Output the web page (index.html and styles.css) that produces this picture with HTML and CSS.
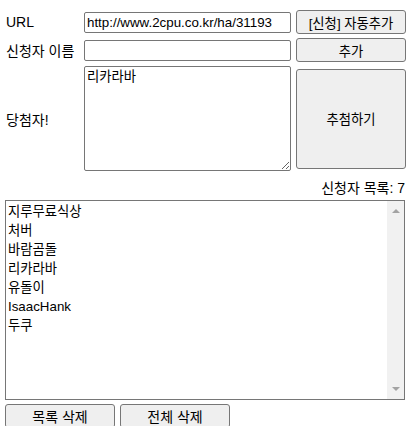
FILE: index.html
```html
<!DOCTYPE html>
<html lang="ko">
<head>
<meta charset="utf-8">
<link rel="stylesheet" href="styles.css">
</head>
<body>
<div class="page">
  <div class="form">
    <label class="lbl">URL</label>
    <input class="field" type="text" value="http://www.2cpu.co.kr/ha/31193">
    <button class="btn btn-row">[신청] 자동추가</button>

    <label class="lbl">신청자 이름</label>
    <input class="field" type="text" value="">
    <button class="btn btn-row">추가</button>

    <label class="lbl">당첨자!</label>
    <textarea class="winner">리카라바</textarea>
    <button class="btn btn-draw">추첨하기</button>
  </div>

  <div class="count">신청자 목록: 7</div>

  <div class="listbox">
    <div class="items">
      <div>지루무료식상</div>
      <div>처버</div>
      <div>바람곰돌</div>
      <div>리카라바</div>
      <div>유돌이</div>
      <div>IsaacHank</div>
      <div>두쿠</div>
    </div>
    <div class="scrollbar">
      <span class="arrow up"></span>
      <span class="arrow down"></span>
    </div>
  </div>

  <div class="actions">
    <button class="btn btn-bottom">목록 삭제</button>
    <button class="btn btn-bottom">전체 삭제</button>
  </div>
</div>
</body>
</html>
```
FILE: styles.css
```css
* { box-sizing: border-box; }
html, body { margin: 0; padding: 0; background: #fff; }
body {
  font-family: "Liberation Sans", "Noto Sans CJK KR", sans-serif;
  color: #000;
  overflow: hidden;
}
.page {
  padding: 10px 6px 0 5px;
  width: 412px;
}
.form {
  display: grid;
  grid-template-columns: 74px 207px 110px;
  column-gap: 5px;
  row-gap: 4px;
  align-items: center;
}
.lbl {
  font-size: 14px;
  padding-left: 1px;
  white-space: nowrap;
}
.field {
  height: 21px;
  border: 1px solid #767676;
  border-radius: 2px;
  font: 13.33px "Liberation Sans", "Noto Sans CJK KR", sans-serif;
  padding: 0 2px;
  color: #000;
  outline: none;
}
.btn {
  font: 13.33px "Liberation Sans", "Noto Sans CJK KR", sans-serif;
  background: #efefef;
  border: 1px solid #767676;
  border-radius: 3px;
  color: #000;
  padding: 0;
}
.btn-row { height: 24px; }
.btn-draw { height: 100px; }
.winner {
  height: 105px;
  border: 1px solid #767676;
  border-radius: 2px;
  font: 13.33px/17px "Liberation Sans", "Noto Sans CJK KR", sans-serif;
  padding: 1px 2px;
  resize: both;
  outline: none;
  color: #000;
}
.count {
  text-align: right;
  font-size: 14px;
  margin-top: 6px;
  height: 22px;
  line-height: 22px;
  padding-right: 1px;
}
.listbox {
  margin-top: 1px;
  width: 400px;
  height: 200px;
  border: 1px solid #767676;
  display: flex;
}
.items {
  flex: 1;
  padding: 1px 2px;
  font-size: 13.33px;
  line-height: 19px;
}
.scrollbar {
  width: 17px;
  background: #f1f1f1;
  display: flex;
  flex-direction: column;
  justify-content: space-between;
  align-items: center;
  padding: 8px 0;
}
.arrow {
  width: 0;
  height: 0;
  border-left: 4px solid transparent;
  border-right: 4px solid transparent;
}
.arrow.up { border-bottom: 4px solid #a3a3a3; }
.arrow.down { border-top: 4px solid #a3a3a3; }
.actions {
  display: flex;
  gap: 5px;
  margin-top: 4px;
}
.btn-bottom {
  width: 110px;
  height: 24px;
  font-size: 14px;
}
```
